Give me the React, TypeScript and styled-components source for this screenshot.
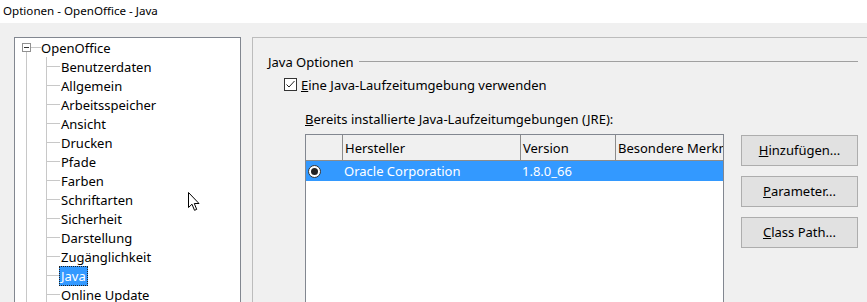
import React from "react";
import styled, { createGlobalStyle } from "styled-components";

const LINE = "#c8c8c8";
const SELECT = "#3399ff";

const GlobalStyle = createGlobalStyle`
  html, body {
    margin: 0;
    padding: 0;
    width: 867px;
    height: 302px;
    overflow: hidden;
    background: #f0f0f0;
  }
  body {
    font-family: "Noto Sans", "Open Sans", sans-serif;
    font-size: 13px;
    color: #000;
  }
`;

const Window = styled.div`
  width: 867px;
  height: 302px;
  display: flex;
  flex-direction: column;
  position: relative;
  overflow: hidden;
`;

const TitleBar = styled.div`
  height: 23px;
  flex-shrink: 0;
  background: #fff;
  display: flex;
  align-items: center;
  padding: 0 0 2px 3px;
  box-sizing: border-box;
  font-size: 11.6px;
`;

const Body = styled.div`
  flex: 1;
  display: flex;
  align-items: flex-start;
  padding: 14px 0 0 14px;
  overflow: hidden;
  background: #f0f0f0;
`;

/* ---------- tree ---------- */

const TreePanel = styled.div`
  width: 227px;
  height: 300px;
  flex-shrink: 0;
  box-sizing: border-box;
  border: 1px solid #828790;
  background: #fff;
  display: flex;
  flex-direction: column;
`;

const lineV = (x: number) =>
  `linear-gradient(${LINE}, ${LINE}) ${x}px 0 / 1px 100% no-repeat`;
const lineH = (x: number, w: number) =>
  `linear-gradient(${LINE}, ${LINE}) ${x}px 9px / ${w}px 1px no-repeat`;

const TreeRow = styled.div<{ $level: number; $first?: boolean }>`
  height: 19px;
  display: flex;
  align-items: center;
  padding-left: ${({ $level }) => ($level === 0 ? 7 : 45)}px;
  white-space: nowrap;
  background: ${({ $level, $first }) =>
    $level === 0
      ? `${lineH(16, 10)}, linear-gradient(${LINE}, ${LINE}) 11px ${
          $first ? 14 : 0
        }px / 1px 100% no-repeat`
      : `${lineV(11)}, ${lineV(31)}, ${lineH(31, 14)}`};
`;

const ExpandBox = styled.span`
  width: 9px;
  height: 9px;
  box-sizing: border-box;
  border: 1px solid #919191;
  background: #fff;
  margin-right: 9px;
  display: flex;
  align-items: center;
  justify-content: center;
  &::before {
    content: "";
    width: 5px;
    height: 1px;
    background: #333;
  }
`;

const TreeLabel = styled.span<{ $selected?: boolean }>`
  height: 20px;
  display: flex;
  align-items: center;
  padding: 0 1px;
  box-sizing: border-box;
  color: ${({ $selected }) => ($selected ? "#fff" : "#000")};
  background: ${({ $selected }) => ($selected ? SELECT : "transparent")};
  border: 1px dotted ${({ $selected }) => ($selected ? "#222" : "transparent")};
  margin-left: -1px;
`;

/* ---------- right page ---------- */

const Page = styled.div`
  width: 640px;
  height: 300px;
  flex-shrink: 0;
  margin-left: 11px;
  box-sizing: border-box;
  border: 1px solid #bcbcbc;
  padding: 14px 0 0 15px;
  display: flex;
  flex-direction: column;
`;

const GroupHeader = styled.div`
  width: 590px;
  height: 19px;
  display: flex;
  align-items: center;
  gap: 5px;
  &::after {
    content: "";
    flex: 1;
    height: 1px;
    background: #a0a0a0;
  }
`;

const CheckRow = styled.label`
  height: 19px;
  margin: 4px 0 0 16px;
  display: flex;
  align-items: center;
  gap: 4px;
`;

const CheckBox = styled.span`
  width: 13px;
  height: 13px;
  box-sizing: border-box;
  border: 1px solid #333;
  background: #fff;
  display: flex;
  align-items: center;
  justify-content: center;
`;

const SubLabel = styled.div`
  height: 19px;
  margin: 15px 0 0 37px;
  display: flex;
  align-items: center;
`;

const ContentRow = styled.div`
  display: flex;
  align-items: flex-start;
  margin: 6px 0 0 37px;
`;

const Table = styled.div`
  width: 419px;
  height: 200px;
  box-sizing: border-box;
  border: 1px solid #828790;
  background: #fff;
  overflow: hidden;
`;

const TableGrid = styled.div`
  display: grid;
  grid-template-columns: 37px 178px 95px 120px;
`;

const HeadCell = styled.div`
  height: 26px;
  box-sizing: border-box;
  border-right: 1px solid #8c8c8c;
  border-bottom: 1px solid #8c8c8c;
  background: #f0f0f0;
  display: flex;
  align-items: center;
  padding-left: 2px;
  white-space: nowrap;
  overflow: hidden;
`;

const Cell = styled.div<{ $selected?: boolean }>`
  height: 20px;
  display: flex;
  align-items: center;
  padding-left: 1px;
  white-space: nowrap;
  color: ${({ $selected }) => ($selected ? "#fff" : "#000")};
  background: ${({ $selected }) => ($selected ? SELECT : "transparent")};
`;

const Radio = styled.span`
  width: 13px;
  height: 13px;
  margin-left: 1px;
  box-sizing: border-box;
  border-radius: 50%;
  border: 1px solid #333;
  background: #fff;
  display: flex;
  align-items: center;
  justify-content: center;
  &::before {
    content: "";
    width: 7px;
    height: 7px;
    border-radius: 50%;
    background: #222;
  }
`;

const ButtonColumn = styled.div`
  display: flex;
  flex-direction: column;
  gap: 10px;
  margin: 1px 0 0 17px;
`;

const Button = styled.button`
  width: 117px;
  height: 31px;
  box-sizing: border-box;
  border: 1px solid #adadad;
  background: #e1e1e1;
  font: inherit;
  color: #000;
  padding: 0 0 1px;
`;

const Pointer = styled.svg`
  position: absolute;
  left: 188px;
  top: 192px;
`;

const treeItems = [
  "Benutzerdaten",
  "Allgemein",
  "Arbeitsspeicher",
  "Ansicht",
  "Drucken",
  "Pfade",
  "Farben",
  "Schriftarten",
  "Sicherheit",
  "Darstellung",
  "Zugänglichkeit",
  "Java",
  "Online Update",
];

const columns = ["", "Hersteller", "Version", "Besondere Merkmale"];

export default function App() {
  return (
    <>
      <GlobalStyle />
      <Window>
        <TitleBar>Optionen - OpenOffice - Java</TitleBar>
        <Body>
          <TreePanel>
            <TreeRow $level={0} $first>
              <ExpandBox />
              <TreeLabel>OpenOffice</TreeLabel>
            </TreeRow>
            {treeItems.map((item) => (
              <TreeRow key={item} $level={1}>
                <TreeLabel $selected={item === "Java"}>{item}</TreeLabel>
              </TreeRow>
            ))}
          </TreePanel>

          <Page>
            <GroupHeader>Java Optionen</GroupHeader>
            <CheckRow>
              <CheckBox>
                <svg width="11" height="11" viewBox="0 0 11 11">
                  <path d="M1.5 5.5 L4 8 L9.5 2" fill="none" stroke="#222" strokeWidth="1" />
                </svg>
              </CheckBox>
              <span>
                <u>E</u>ine Java-Laufzeitumgebung verwenden
              </span>
            </CheckRow>
            <SubLabel>
              <span>
                <u>B</u>ereits installierte Java-Laufzeitumgebungen (JRE):
              </span>
            </SubLabel>
            <ContentRow>
              <Table>
                <TableGrid>
                  {columns.map((c, i) => (
                    <HeadCell key={i}>{c}</HeadCell>
                  ))}
                  <Cell $selected>
                    <Radio />
                  </Cell>
                  <Cell $selected>Oracle Corporation</Cell>
                  <Cell $selected>1.8.0_66</Cell>
                  <Cell $selected />
                </TableGrid>
              </Table>
              <ButtonColumn>
                <Button>
                  <u>H</u>inzufügen...
                </Button>
                <Button>
                  <u>P</u>arameter...
                </Button>
                <Button>
                  <u>C</u>lass Path...
                </Button>
              </ButtonColumn>
            </ContentRow>
          </Page>
        </Body>
        <Pointer width="13" height="20" viewBox="0 0 13 20">
          <path
            d="M0.5 0.5 L0.5 15.5 L4 12.2 L6.5 18.3 L8.7 17.4 L6.3 11.5 L11 11.5 Z"
            fill="#fff"
            stroke="#000"
            strokeWidth="1"
            strokeLinejoin="miter"
          />
        </Pointer>
      </Window>
    </>
  );
}
